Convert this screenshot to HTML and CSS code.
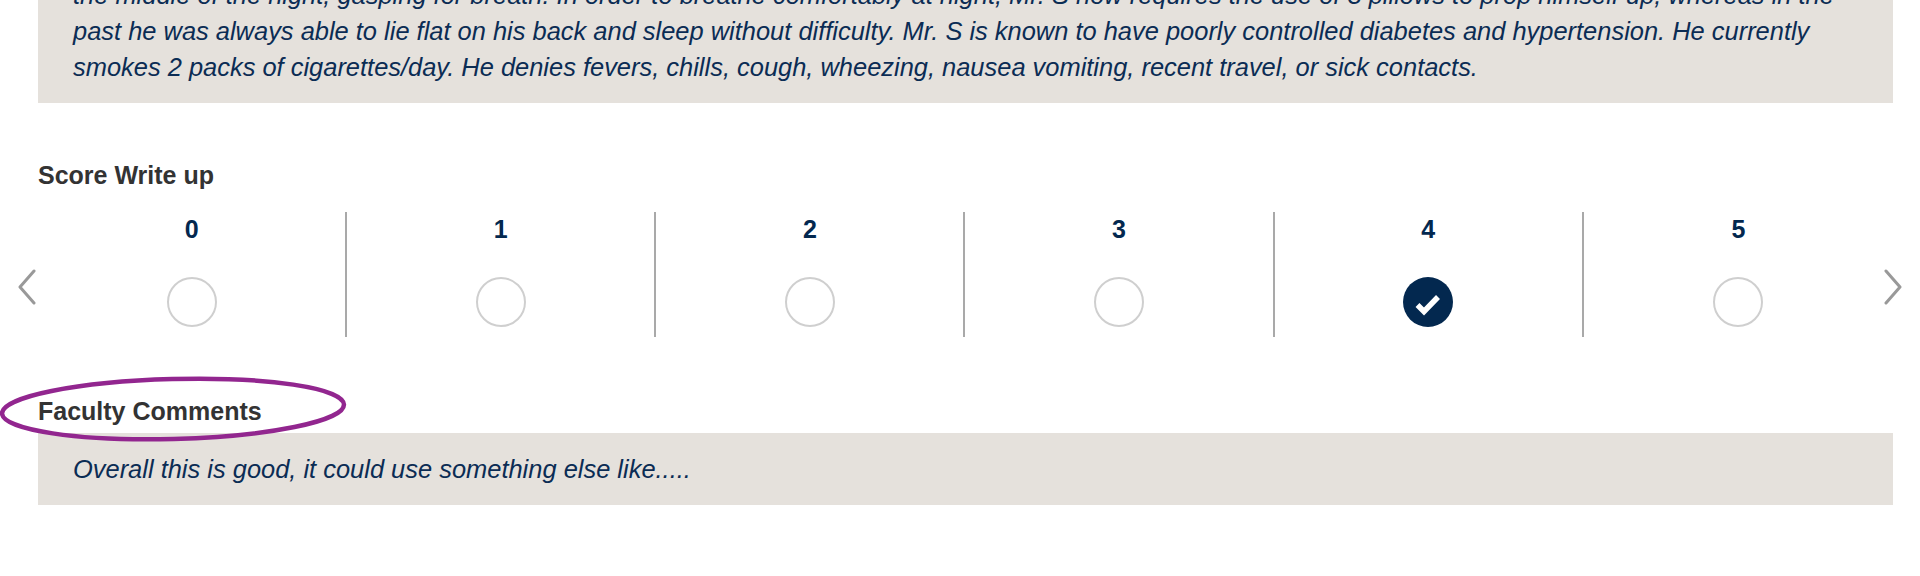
FILE: index.html
```html
<!DOCTYPE html>
<html lang="en">
<head>
<meta charset="utf-8">
<title>Score Write up</title>
<link rel="stylesheet" href="styles.css">
</head>
<body>
<div class="page">
  <div class="writeup">
    <p>the middle of the night, gasping for breath. In order to breathe comfortably at night, Mr. S now requires the use of 3 pillows to prop himself up, whereas in the<br>past he was always able to lie flat on his back and sleep without difficulty. Mr. S is known to have poorly controlled diabetes and hypertension. He currently<br>smokes 2 packs of cigarettes/day. He denies fevers, chills, cough, wheezing, nausea vomiting, recent travel, or sick contacts.</p>
  </div>

  <h3 class="label score-label">Score Write up</h3>
  <div class="carousel">
    <button class="arrow arrow-left" aria-label="Previous">
      <svg viewBox="0 0 20 36" width="20" height="36"><path d="M17 2 L3 18 L17 34" fill="none" stroke="#999" stroke-width="3" stroke-linecap="round" stroke-linejoin="round"/></svg>
    </button>
    <div class="scores">
      <div class="score"><div class="num">0</div><span class="radio"></span></div>
      <div class="score"><div class="num">1</div><span class="radio"></span></div>
      <div class="score"><div class="num">2</div><span class="radio"></span></div>
      <div class="score"><div class="num">3</div><span class="radio"></span></div>
      <div class="score"><div class="num">4</div>
        <svg class="checked" viewBox="0 0 50 50" width="50" height="50"><circle cx="25" cy="25" r="25" fill="#03284f"/><path d="M14.5 28 L21 34.5 L35 20" fill="none" stroke="#fff" stroke-width="5.5" stroke-linejoin="miter" stroke-linecap="butt"/></svg>
      </div>
      <div class="score"><div class="num">5</div><span class="radio"></span></div>
    </div>
    <button class="arrow arrow-right" aria-label="Next">
      <svg viewBox="0 0 20 36" width="20" height="36"><path d="M3 2 L17 18 L3 34" fill="none" stroke="#999" stroke-width="3" stroke-linecap="round" stroke-linejoin="round"/></svg>
    </button>
  </div>

  <div class="comments-head">
    <h3 class="label">Faculty Comments</h3>
    <svg class="annotation" viewBox="0 0 350 72" width="350" height="72"><ellipse cx="173" cy="33" rx="171" ry="30" fill="none" stroke="#92268f" stroke-width="4.5" transform="rotate(-1.5 173 33)"/></svg>
  </div>
  <div class="comment-box">
    <p>Overall this is good, it could use something else like.....</p>
  </div>
</div>
</body>
</html>
```

FILE: styles.css
```css
* { box-sizing: border-box; }
html, body { margin: 0; padding: 0; background: #fff; overflow: hidden; }
body {
  font-family: "Liberation Sans", Arial, Helvetica, sans-serif;
  color: #333;
}
.page {
  width: 1920px;
  padding: 0 27px 0 38px;
}
.writeup {
  margin-top: -40px;
  background: #e5e1dc;
  padding: 17px 35px 18px 35px;
}
.writeup p, .comment-box p {
  margin: 0;
  font-size: 25.45px;
  line-height: 36px;
  font-style: italic;
  color: #0b2c54;
  white-space: nowrap;
}
.label {
  margin: 0;
  font-size: 25px;
  line-height: 28px;
  font-weight: bold;
  color: #333;
}
.score-label {
  margin-top: 58px;
}
.carousel {
  position: relative;
  margin-top: 23px;
}
.scores {
  display: grid;
  grid-template-columns: repeat(6, 1fr);
}
.score {
  display: flex;
  flex-direction: column;
  align-items: center;
  height: 125px;
  padding-top: 3px;
  border-right: 2px solid #a9a9a9;
}
.score:last-child { border-right: none; }
.num {
  font-size: 25px;
  line-height: 28px;
  font-weight: bold;
  color: #03284f;
}
.radio, .checked {
  margin-top: 34px;
  width: 50px;
  height: 50px;
  display: block;
}
.radio {
  border: 2px solid #cfcfcf;
  border-radius: 50%;
}
.arrow {
  position: absolute;
  top: 57px;
  padding: 0;
  border: 0;
  background: none;
  width: 20px;
  height: 36px;
}
.arrow svg { display: block; }
.arrow-left { left: -21px; }
.arrow-right { right: -10px; }
.comments-head {
  position: relative;
  margin-top: 60px;
}
.annotation {
  position: absolute;
  left: -38px;
  top: -21px;
  pointer-events: none;
}
.comment-box {
  margin-top: 8px;
  background: #e5e1dc;
  padding: 18px 35px;
}
```
